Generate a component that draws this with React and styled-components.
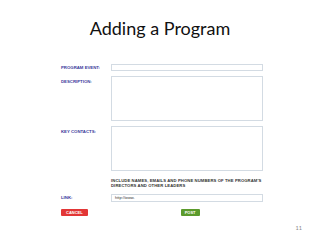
import React from "react";
import styled, { createGlobalStyle } from "styled-components";

const Global = createGlobalStyle`
  html, body { margin: 0; padding: 0; background: #fff; }
  body { width: 320px; height: 240px; overflow: hidden; }
`;

const Slide = styled.div`
  width: 320px;
  height: 240px;
  display: flex;
  flex-direction: column;
  font-family: "Liberation Sans", Arial, sans-serif;
`;

const Title = styled.h1`
  margin: 0;
  padding-top: 18px;
  height: 47px;
  box-sizing: border-box;
  text-align: center;
  font-family: Lato, "Open Sans", sans-serif;
  font-weight: 400;
  font-size: 18px;
  line-height: 21px;
  color: #111;
`;

const Form = styled.div`
  display: grid;
  grid-template-columns: 50px 152px;
  padding-left: 61px;
  padding-top: 17px;
  row-gap: 5px;
`;

const Label = styled.div`
  font-size: 4.3px;
  font-weight: bold;
  color: #3b3b9c;
  line-height: 5px;
  padding-top: ${(p) => p.$top || 2}px;
`;

const Input = styled.div`
  height: ${(p) => p.$h}px;
  box-sizing: border-box;
  border: 1px solid #d3dbe3;
  background: #fff;
  font-size: 4px;
  line-height: 6px;
  padding-left: 3px;
  color: #333;
`;

const Help = styled.div`
  grid-column: 2;
  font-size: 4.2px;
  letter-spacing: 0.1px;
  font-weight: bold;
  color: #333;
  line-height: 5px;
  padding-top: 2px;
  padding-bottom: 1px;
`;

const Buttons = styled.div`
  grid-column: 1 / span 2;
  display: flex;
  gap: 93px;
  padding-top: 2px;
`;

const Button = styled.div`
  height: 7px;
  padding: 0 ${(p) => p.$pad}px;
  background: ${(p) => p.$bg};
  color: #fff;
  font-size: 4px;
  font-weight: bold;
  line-height: 7px;
  border-radius: 1px;
`;

const PageNum = styled.div`
  margin-top: auto;
  align-self: flex-end;
  padding: 0 18px 9px 0;
  font-family: Lato, "Open Sans", sans-serif;
  font-size: 5.5px;
  color: #888;
`;

const Empty = styled.div``;

export default function App() {
  return (
    <>
      <Global />
      <Slide>
        <Title>Adding a Program</Title>
        <Form>
          <Label $top={1}>PROGRAM EVENT:</Label>
          <Input $h={7} />
          <Label $top={3}>DESCRIPTION:</Label>
          <Input $h={45} />
          <Label $top={3}>KEY CONTACTS:</Label>
          <Input $h={45} />
          <Empty />
          <Help>
            INCLUDE NAMES, EMAILS AND PHONE NUMBERS OF THE PROGRAM'S DIRECTORS AND OTHER LEADERS
          </Help>
          <Label $top={1}>LINK:</Label>
          <Input $h={8}>http://www.</Input>
          <Buttons>
            <Button $bg="#e23636" $pad={5}>CANCEL</Button>
            <Button $bg="#5b9a2c" $pad={4}>POST</Button>
          </Buttons>
        </Form>
        <PageNum>11</PageNum>
      </Slide>
    </>
  );
}
